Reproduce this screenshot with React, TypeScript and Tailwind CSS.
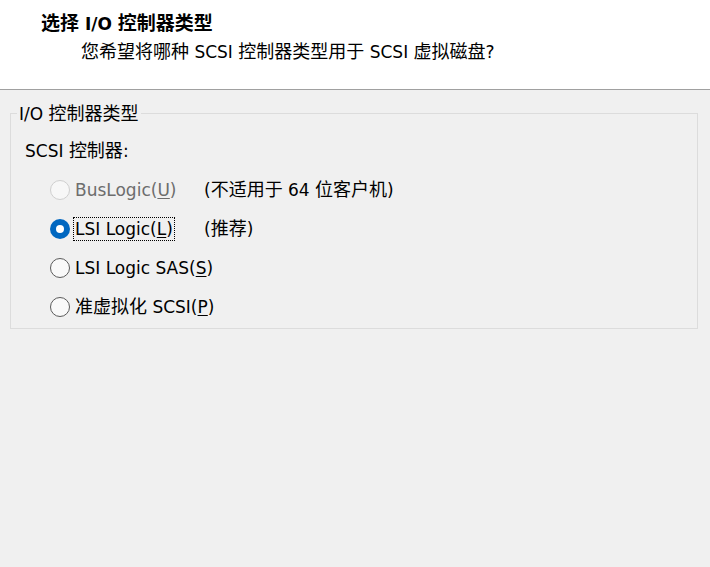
import { useState, type ReactNode } from 'react';

// CJK glyphs in the original dialog are a little wider than the Latin ones
function Zh({ children }: { children: ReactNode }) {
  return <span className="text-[18px]">{children}</span>;
}

type Option = {
  id: string;
  label: ReactNode;
  key: string;
  note?: ReactNode;
  disabled?: boolean;
};

const options: Option[] = [
  {
    id: 'buslogic',
    label: 'BusLogic(',
    key: 'U',
    note: (
      <>
        (<Zh>不适用于</Zh> 64 <Zh>位客户机</Zh>)
      </>
    ),
    disabled: true,
  },
  { id: 'lsi', label: 'LSI Logic(', key: 'L', note: <>(<Zh>推荐</Zh>)</> },
  { id: 'sas', label: 'LSI Logic SAS(', key: 'S' },
  {
    id: 'pvscsi',
    label: (
      <>
        <Zh>准虚拟化</Zh> SCSI(
      </>
    ),
    key: 'P',
  },
];

function Radio({ checked, disabled }: { checked: boolean; disabled?: boolean }) {
  if (checked) {
    return (
      <span className="w-5 h-5 rounded-full bg-[#0067c0] flex items-center justify-center shrink-0">
        <span className="w-2 h-2 rounded-full bg-white" />
      </span>
    );
  }
  return (
    <span
      className={
        disabled
          ? 'w-5 h-5 rounded-full border border-[#cfcfcf] bg-[#f7f7f7] shrink-0'
          : 'w-5 h-5 rounded-full border border-[#5b5b5b] bg-[#f9f9f9] shrink-0'
      }
    />
  );
}

export default function App() {
  const [selected, setSelected] = useState('lsi');

  return (
    <div
      className="w-[710px] h-[567px] bg-[#f0f0f0] text-black text-[17px] leading-[24px] overflow-hidden"
      style={{ fontFamily: '"DejaVu Sans", "Noto Sans CJK SC", sans-serif' }}
    >
      {/* Header */}
      <div className="h-[90px] bg-white border-b border-[#a0a0a0] pt-[11px]">
        <div className="pl-[41px] font-bold">
          <span className="text-[19px]">选择</span> I/O <span className="text-[19px]">控制器类型</span>
        </div>
        <div className="pl-[81px] mt-[4px]">
          <Zh>您希望将哪种</Zh> SCSI <Zh>控制器类型用于</Zh> SCSI <Zh>虚拟磁盘</Zh>?
        </div>
      </div>

      {/* Group box */}
      <div className="relative mt-[23px] ml-[10px] w-[688px] h-[216px] border border-[#dcdcdc]">
        <span className="absolute -top-[12px] left-[6px] px-[2px] bg-[#f0f0f0]">
          I/O <Zh>控制器类型</Zh>
        </span>

        <div className="pt-[25px] pl-[14px]">
          SCSI <Zh>控制器</Zh>:
        </div>

        <div className="flex flex-col mt-[7px]">
          {options.map((o) => (
            <button
              key={o.id}
              disabled={o.disabled}
              onClick={() => setSelected(o.id)}
              className="h-[39px] flex items-center pl-[39px] text-left cursor-default whitespace-nowrap"
            >
              <Radio checked={selected === o.id} disabled={o.disabled} />
              <span
                className={
                  'ml-[4px] min-w-[130px] flex ' + (o.disabled ? 'text-[#6d6d6d]' : 'text-black')
                }
              >
                <span
                  className={
                    selected === o.id
                      ? 'outline outline-1 outline-dotted outline-black px-[1px] leading-[22px]'
                      : 'px-[1px]'
                  }
                >
                  {o.label}
                  <span className="underline underline-offset-2">{o.key}</span>)
                </span>
              </span>
              {o.note && <span className="text-black">{o.note}</span>}
            </button>
          ))}
        </div>
      </div>
    </div>
  );
}
